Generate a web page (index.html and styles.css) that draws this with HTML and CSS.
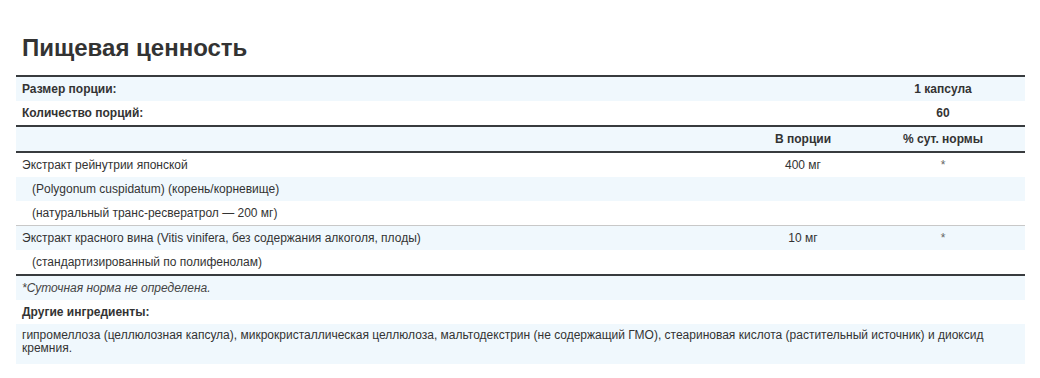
FILE: index.html
```html
<!DOCTYPE html>
<html lang="ru">
<head>
<meta charset="utf-8">
<title>Пищевая ценность</title>
<link rel="stylesheet" href="styles.css">
</head>
<body>
<div class="page">
  <h2 class="title">Пищевая ценность</h2>
  <table class="facts">
    <colgroup>
      <col>
      <col class="col-amt">
      <col class="col-dv">
    </colgroup>
    <tbody class="group">
      <tr class="alt"><td class="b">Размер порции:</td><td></td><td class="c b">1 капсула</td></tr>
      <tr><td class="b">Количество порций:</td><td></td><td class="c b">60</td></tr>
    </tbody>
    <tbody class="group">
      <tr class="alt"><td></td><td class="c b">В порции</td><td class="c b">% сут. нормы</td></tr>
    </tbody>
    <tbody class="group">
      <tr><td>Экстракт рейнутрии японской</td><td class="c">400 мг</td><td class="c star">*</td></tr>
      <tr class="alt"><td class="sub">(Polygonum cuspidatum) (корень/корневище)</td><td></td><td></td></tr>
      <tr><td class="sub">(натуральный транс-ресвератрол — 200 мг)</td><td></td><td></td></tr>
      <tr class="alt sep"><td>Экстракт красного вина (Vitis vinifera, без содержания алкоголя, плоды)</td><td class="c">10 мг</td><td class="c star">*</td></tr>
      <tr><td class="sub">(стандартизированный по полифенолам)</td><td></td><td></td></tr>
    </tbody>
    <tbody class="group">
      <tr class="alt"><td colspan="3" class="note">*Суточная норма не определена.</td></tr>
      <tr><td colspan="3" class="b">Другие ингредиенты:</td></tr>
      <tr class="alt"><td colspan="3" class="ingr">гипромеллоза (целлюлозная капсула), микрокристаллическая целлюлоза, мальтодекстрин (не содержащий ГМО), стеариновая кислота (растительный источник) и диоксид кремния.</td></tr>
    </tbody>
  </table>
</div>
</body>
</html>
```

FILE: styles.css
```css
html, body {
  margin: 0;
  padding: 0;
  background: #ffffff;
}
body {
  font-family: Arial, "Liberation Sans", sans-serif;
  color: #333333;
}
.page {
  padding: 0 15px 0 16px;
}
.title {
  margin: 0;
  padding-top: 34px;
  font-size: 24px;
  line-height: 28px;
  font-weight: bold;
  color: #333333;
  padding-left: 6px;
  height: 41px;
}
.facts {
  width: 1009px;
  border-collapse: collapse;
  font-size: 12px;
  line-height: 14px;
}
.col-amt { width: 116px; }
.col-dv { width: 164px; }
.group {
  border-top: 2px solid #383b3e;
}
.facts td {
  padding: 5px 6px;
  vertical-align: top;
}
.alt td {
  background: #f0f8fd;
}
.sep td {
  border-top: 1px solid #c8c8c8;
}
.b { font-weight: bold; }
.c { text-align: center; }
.sub { padding-left: 16px !important; }
.star { color: #666; }
.note { font-style: italic; color: #444; }
.ingr { padding-right: 40px !important; line-height: 13px; padding-bottom: 9px !important; }
```
